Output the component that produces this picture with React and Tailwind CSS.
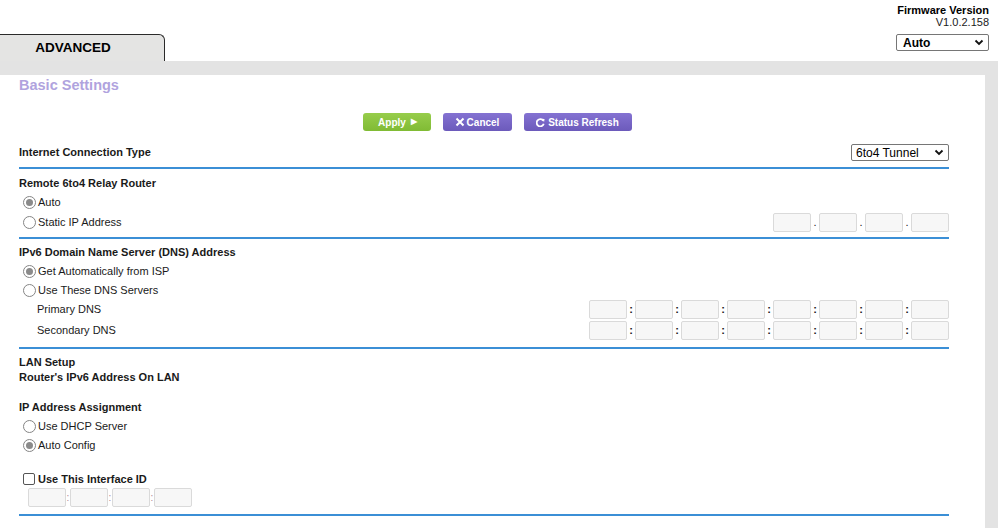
import React from "react";

const font = { fontFamily: '"Liberation Sans", Arial, sans-serif' };

function Radio({ checked, label }) {
  return (
    <div className="flex items-center pl-[4px]">
      <span className="flex h-[13px] w-[13px] items-center justify-center rounded-full border border-[#858585] bg-white">
        {checked && <span className="h-[7px] w-[7px] rounded-full bg-[#8a8a8a]" />}
      </span>
      <span className="ml-[2px] text-[11px] text-[#1a1a1a]">{label}</span>
    </div>
  );
}

function Box({ w = "w-[38px]" }) {
  return <span className={`${w} h-[19px] rounded-[2px] border border-[#dadada] bg-[#f7f7f7]`} />;
}

function Fields({ count, sep, sepClass, boxW }) {
  const items = [];
  for (let i = 0; i < count; i++) {
    if (i > 0)
      items.push(
        <span key={"s" + i} className={sepClass}>
          {sep}
        </span>
      );
    items.push(<Box key={"b" + i} w={boxW} />);
  }
  return <div className="flex items-center">{items}</div>;
}

function Select({ value, className, bold }) {
  return (
    <div
      className={`flex items-center justify-between rounded-[2px] border border-[#767676] bg-white pl-[4px] pr-[4px] ${className}`}
    >
      <span className={`text-[12px] text-black ${bold ? "font-bold" : ""}`}>{value}</span>
      <svg width="10" height="7" viewBox="0 0 10 7">
        <polyline points="1.5,1.5 5,5 8.5,1.5" fill="none" stroke="#111" strokeWidth="1.8" />
      </svg>
    </div>
  );
}

function Line() {
  return <div className="h-[2px] bg-[#3b8fd6]" />;
}

function Btn({ children, color }) {
  return (
    <div
      className={`flex h-[18px] items-center justify-center rounded-[3px] text-[10px] font-bold text-white ${color}`}
    >
      {children}
    </div>
  );
}

export default function App() {
  return (
    <div className="flex h-[528px] w-[998px] flex-col overflow-hidden bg-white" style={font}>
      {/* Header */}
      <div className="flex h-[61px] shrink-0 items-start justify-between">
        <div className="mt-[34px] flex h-[27px] w-[165px] items-center justify-center rounded-tr-[6px] border-t border-r border-[#2a2a2a] bg-[#e4e4e3]">
          <span className="mr-[18px] text-[13.5px] font-bold text-black">ADVANCED</span>
        </div>
        <div className="flex flex-col items-end pr-[9px] pt-[4px]">
          <div className="text-[11px] leading-[12px] font-bold text-black">Firmware Version</div>
          <div className="text-[11px] leading-[12px] text-[#1a1a1a]">V1.0.2.158</div>
          <Select value="Auto" bold className="mt-[6px] h-[17px] w-[93px] pl-[6px]" />
        </div>
      </div>

      {/* Gray band */}
      <div className="flex flex-1 flex-col bg-[#e3e3e3] pr-[13px] pt-[14px]">
        <div className="flex-1 bg-white pl-[19px] pr-[36px] text-[11px] text-[#1a1a1a]">
          <div className="flex h-[22px] items-center">
            <span className="text-[14.5px] font-bold text-[#b0a3de]">Basic Settings</span>
          </div>

          <div className="mt-[16px] flex justify-center gap-[12px] pl-[26px]">
            <Btn color="w-[68px] bg-gradient-to-b from-[#97cd4b] to-[#80bb34]">
              <span className="ml-[2px]">Apply</span>
              <span className="ml-[5px] text-[8px]">▶</span>
            </Btn>
            <Btn color="w-[69px] bg-gradient-to-b from-[#8472d2] to-[#6c5abb]">
              <svg width="10" height="10" viewBox="0 0 10 10" className="mr-[2px]">
                <path d="M1.5 1.5 L8.5 8.5 M8.5 1.5 L1.5 8.5" stroke="#fff" strokeWidth="2" />
              </svg>
              <span>Cancel</span>
            </Btn>
            <Btn color="w-[108px] bg-gradient-to-b from-[#8472d2] to-[#6c5abb]">
              <svg width="9" height="9" viewBox="0 0 10 10" className="mr-[3px]">
                <path d="M8 3 A4 4 0 1 0 8.6 6.5" fill="none" stroke="#fff" strokeWidth="2" />
                <path d="M6 0.8 L9.5 1 L9 4.5 Z" fill="#fff" />
              </svg>
              <span>Status Refresh</span>
            </Btn>
          </div>

          <div className="mt-[12px] flex h-[19px] items-center justify-between">
            <span className="font-bold">Internet Connection Type</span>
            <Select value="6to4 Tunnel" className="h-[17px] w-[98px]" />
          </div>
          <div className="mt-[5px]">
            <Line />
          </div>

          <div className="mt-[4px] flex h-[20px] items-center font-bold">Remote 6to4 Relay Router</div>
          <div className="flex h-[19px] items-center">
            <Radio checked label="Auto" />
          </div>
          <div className="flex h-[20px] items-center justify-between">
            <Radio label="Static IP Address" />
            <Fields count={4} sep="." sepClass="w-[8px] text-center text-[11px] leading-[19px]" />
          </div>
          <div className="mt-[5px]">
            <Line />
          </div>

          <div className="mt-[3px] flex h-[20px] items-center font-bold">IPv6 Domain Name Server (DNS) Address</div>
          <div className="flex h-[19px] items-center">
            <Radio checked label="Get Automatically from ISP" />
          </div>
          <div className="flex h-[19px] items-center">
            <Radio label="Use These DNS Servers" />
          </div>
          <div className="flex h-[19px] items-center justify-between">
            <span className="pl-[18px]">Primary DNS</span>
            <Fields count={8} sep=":" sepClass="w-[8px] text-center text-[11px] font-bold leading-[19px]" />
          </div>
          <div className="mt-[2px] flex h-[19px] items-center justify-between">
            <span className="pl-[18px]">Secondary DNS</span>
            <Fields count={8} sep=":" sepClass="w-[8px] text-center text-[11px] font-bold leading-[19px]" />
          </div>
          <div className="mt-[7px]">
            <Line />
          </div>

          <div className="mt-[5px] flex h-[16px] items-center font-bold">LAN Setup</div>
          <div className="flex h-[15px] items-center font-bold">Router's IPv6 Address On LAN</div>

          <div className="mt-[12px] flex h-[20px] items-center font-bold">IP Address Assignment</div>
          <div className="flex h-[19px] items-center">
            <Radio label="Use DHCP Server" />
          </div>
          <div className="flex h-[19px] items-center">
            <Radio checked label="Auto Config" />
          </div>

          <div className="mt-[15px] flex h-[18px] items-center pl-[4px]">
            <span className="h-[12px] w-[12px] rounded-[2px] border border-[#555] bg-white" />
            <span className="ml-[3px] font-bold">Use This Interface ID</span>
          </div>
          <div className="flex h-[19px] items-center pl-[9px]">
            <Fields count={4} sep=":" sepClass="w-[4px] text-center text-[10px] leading-[19px] text-[#b08a9a]" />
          </div>
          <div className="mt-[7px]">
            <Line />
          </div>
        </div>
      </div>
    </div>
  );
}
